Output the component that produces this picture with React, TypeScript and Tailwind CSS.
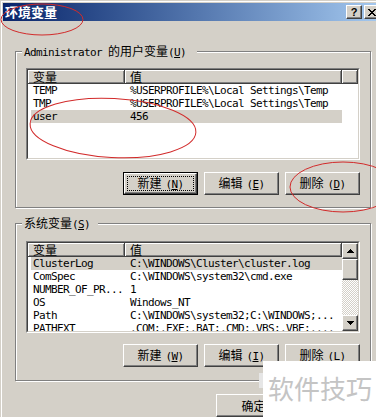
import type { ReactNode } from "react";

type EnvRow = { name: string; value: string; selected?: boolean };

const monoClass =
  "font-['DejaVu_Sans_Mono',monospace] text-[11px] tracking-[-0.62px]";
const cjkClass = "font-['Noto_Sans_CJK_SC',sans-serif] text-[12px]";
const raisedClass =
  "border border-t-white border-l-white border-r-[#404040] border-b-[#404040] bg-[#d4d0c8] shadow-[inset_-1px_-1px_0_#808080]";
const headerCellClass =
  "h-full border-r border-b border-[#404040] bg-[#d4d0c8] shadow-[inset_1px_1px_0_#fff,inset_-1px_-1px_0_#808080]";
const groupClass =
  "m-0 ml-[12px] w-[356px] border border-[#808080] px-[10px] shadow-[inset_1px_1px_0_#fff,1px_1px_0_#fff]";
const legendClass = "ml-[-4px] bg-[#d4d0c8] pl-[2px] leading-[12px]";

const userRows: EnvRow[] = [
  { name: "TEMP", value: "%USERPROFILE%\\Local Settings\\Temp" },
  { name: "TMP", value: "%USERPROFILE%\\Local Settings\\Temp" },
  { name: "user", value: "456", selected: true },
];

const systemRows: EnvRow[] = [
  { name: "ClusterLog", value: "C:\\WINDOWS\\Cluster\\cluster.log", selected: true },
  { name: "ComSpec", value: "C:\\WINDOWS\\system32\\cmd.exe" },
  { name: "NUMBER_OF_PR...", value: "1" },
  { name: "OS", value: "Windows_NT" },
  { name: "Path", value: "C:\\WINDOWS\\system32;C:\\WINDOWS;..." },
  { name: "PATHEXT", value: ".COM;.EXE;.BAT;.CMD;.VBS;.VBE;...." },
];

function Arrow({ down = false }: { down?: boolean }) {
  return (
    <svg width="7" height="4" viewBox="0 0 7 4" shapeRendering="crispEdges">
      <polygon points={down ? "0,0 7,0 3.5,4" : "3.5,0 7,4 0,4"} fill="#000" />
    </svg>
  );
}

function ScrollBar() {
  return (
    <div className="flex w-[16px] shrink-0 flex-col">
      <div className={`flex h-[16px] shrink-0 items-center justify-center ${raisedClass}`}>
        <Arrow />
      </div>
      <div className={`h-[21px] shrink-0 ${raisedClass}`} />
      <div className="flex-1 bg-[repeating-conic-gradient(#d4d0c8_0%_25%,#ffffff_0%_50%)] [background-size:2px_2px]" />
      <div className={`flex h-[16px] shrink-0 items-center justify-center ${raisedClass}`}>
        <Arrow down />
      </div>
    </div>
  );
}

function ListView({ rows, scroll = false }: { rows: EnvRow[]; scroll?: boolean }) {
  return (
    <div className="h-[92px] w-[334px] border border-t-[#808080] border-l-[#808080] border-r-white border-b-white">
      <div className="flex h-full border border-t-[#404040] border-l-[#404040] border-r-[#d4d0c8] border-b-[#d4d0c8] bg-white">
        <div className="flex min-w-0 flex-1 flex-col">
          <div className={`flex h-[14px] shrink-0 leading-[12px] ${cjkClass}`}>
            <div className={`w-[97px] shrink-0 pl-[5px] pt-px ${headerCellClass}`}>变量</div>
            <div className={`w-[217px] shrink-0 pl-[5px] pt-px ${headerCellClass}`}>值</div>
            {scroll ? null : <div className={`flex-1 ${headerCellClass}`} />}
          </div>
          <div className="flex min-h-0 flex-1 flex-col overflow-hidden">
            {rows.map((row) => (
              <div
                key={row.name}
                className={`ml-[3px] flex h-[13px] w-[311px] shrink-0 leading-[13px] ${monoClass} ${
                  row.selected ? "bg-[#d4d0c8]" : ""
                }`}
              >
                <span className="w-[94px] shrink-0 overflow-hidden whitespace-nowrap pl-[2px]">
                  {row.name}
                </span>
                <span className="whitespace-nowrap pl-[5px]">{row.value}</span>
              </div>
            ))}
          </div>
        </div>
        {scroll ? <ScrollBar /> : null}
      </div>
    </div>
  );
}

function ButtonText({ label, hotkey }: { label: string; hotkey?: string }) {
  return (
    <span className="whitespace-nowrap leading-[13px]">
      <span className={cjkClass}>{label}</span>
      {hotkey ? (
        <span className={`ml-[4px] ${monoClass}`}>
          (<span className="underline underline-offset-1">{hotkey}</span>)
        </span>
      ) : null}
    </span>
  );
}

function PushButton({
  label,
  hotkey,
  isDefault = false,
}: {
  label: string;
  hotkey?: string;
  isDefault?: boolean;
}) {
  if (isDefault) {
    return (
      <button type="button" className="h-[23px] w-[75px] border border-black p-0">
        <div className={`flex h-full p-[2px] ${raisedClass}`}>
          <div className="flex flex-1 items-center justify-center border border-dotted border-black">
            <ButtonText label={label} hotkey={hotkey} />
          </div>
        </div>
      </button>
    );
  }

  return (
    <button
      type="button"
      className={`flex h-[23px] w-[75px] items-center justify-center p-0 ${raisedClass}`}
    >
      <ButtonText label={label} hotkey={hotkey} />
    </button>
  );
}

function CaptionButton({ children }: { children: ReactNode }) {
  return (
    <div className={`flex h-[14px] w-[16px] items-center justify-center ${raisedClass}`}>
      {children}
    </div>
  );
}

function TitleBar() {
  return (
    <div className="flex h-[18px] items-center bg-linear-to-r from-[#0a246a] to-[#a6caf0] px-[2px]">
      <span className="flex-1 font-['Noto_Sans_CJK_SC',sans-serif] text-[13px] font-bold leading-[18px] text-white">
        环境变量
      </span>
      <div className="flex gap-[2px]">
        <CaptionButton>
          <span className="font-['Liberation_Sans',sans-serif] text-[11px] font-bold leading-[11px]">
            ?
          </span>
        </CaptionButton>
        <CaptionButton>
          <svg width="8" height="7" viewBox="0 0 8 7" shapeRendering="crispEdges">
            <path d="M0 0h2l2 2.5L6 0h2L5 3.5 8 7H6L4 4.5 2 7H0l3-3.5z" fill="#000" />
          </svg>
        </CaptionButton>
      </div>
    </div>
  );
}

function Annotations() {
  return (
    <svg
      className="pointer-events-none absolute inset-0"
      width="376"
      height="417"
      viewBox="0 0 376 417"
    >
      <g fill="none" stroke="#d22b2b" strokeWidth="1">
        <ellipse cx="42" cy="19.5" rx="41" ry="15.5" />
        <ellipse cx="113" cy="128" rx="83" ry="29.5" transform="rotate(3 113 128)" />
        <ellipse cx="343" cy="187" rx="53" ry="25" />
      </g>
    </svg>
  );
}

export default function App() {
  return (
    <div className="relative h-[417px] w-[376px] overflow-hidden bg-[#d4d0c8] text-black">
      <div className="pl-px pt-px">
        <div className="w-[381px] border-l border-t border-white pl-px pt-px">
          <div className="w-[379px]">
            <TitleBar />
          </div>

          <fieldset className={`mt-[23px] pb-[12px] pt-[9px] ${groupClass}`}>
            <legend className={`${legendClass} pr-[11px]`}>
              <span className={monoClass}>Administrator </span>
              <span className={cjkClass}>的用户变量</span>
              <span className={monoClass}>
                (<span className="underline underline-offset-1">U</span>)
              </span>
            </legend>
            <ListView rows={userRows} />
            <div className="mt-[12px] flex justify-end gap-[6px]">
              <PushButton label="新建" hotkey="N" isDefault />
              <PushButton label="编辑" hotkey="E" />
              <PushButton label="删除" hotkey="D" />
            </div>
          </fieldset>

          <fieldset className={`mt-[8px] pb-[13px] pt-[10px] ${groupClass}`}>
            <legend className={`${legendClass} pr-[8px]`}>
              <span className={cjkClass}>系统变量</span>
              <span className={monoClass}>
                (<span className="underline underline-offset-1">S</span>)
              </span>
            </legend>
            <ListView rows={systemRows} scroll />
            <div className="mt-[11px] flex justify-end gap-[6px]">
              <PushButton label="新建" hotkey="W" />
              <PushButton label="编辑" hotkey="I" />
              <PushButton label="删除" hotkey="L" />
            </div>
          </fieldset>

          <div className="ml-[213px] mt-[13px] flex">
            <PushButton label="确定" />
          </div>
        </div>
      </div>

      <div className="absolute left-[259px] top-[373px] h-[15px] w-[5px] bg-[#e6e6e6]" />
      <div className="absolute bottom-0 right-0 h-[56px] w-[113px] bg-white pl-[5px] pt-[9px]">
        <span className="font-['Noto_Sans_CJK_SC',sans-serif] text-[26px] leading-[36px] text-[#c4c4c4]">
          软件技巧
        </span>
      </div>

      <Annotations />
    </div>
  );
}
